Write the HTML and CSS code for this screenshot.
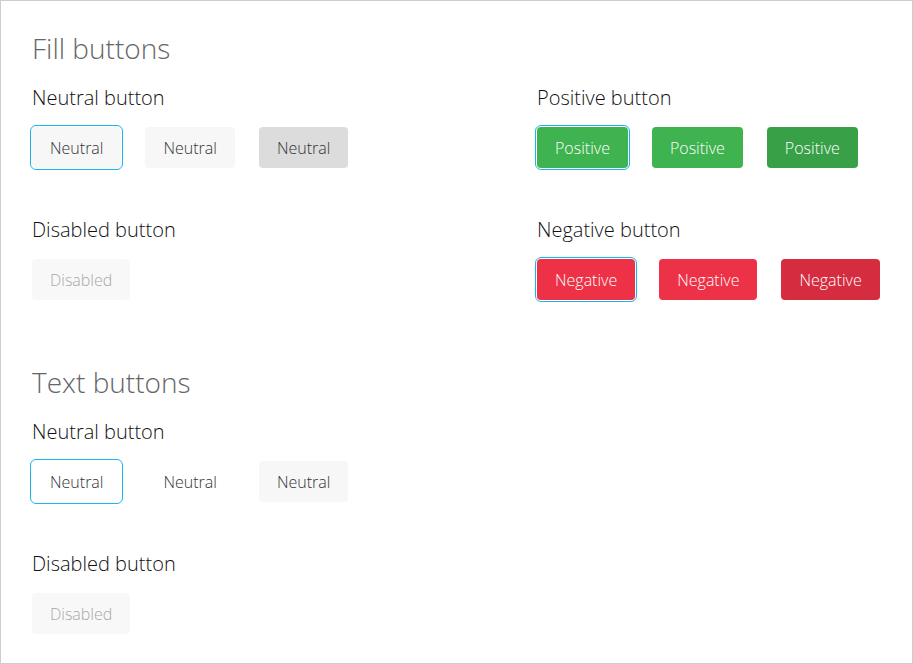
FILE: index.html
```html
<!DOCTYPE html>
<html lang="en">
<head>
<meta charset="utf-8">
<title>Buttons</title>
<link rel="stylesheet" href="styles.css">
</head>
<body>
<div class="frame">
  <section class="section">
    <h1 class="section-title">Fill buttons</h1>
    <div class="grid">
      <div class="group">
        <h2 class="group-title">Neutral button</h2>
        <div class="row">
          <button class="btn fill-neutral focused">Neutral</button>
          <button class="btn fill-neutral">Neutral</button>
          <button class="btn fill-neutral pressed">Neutral</button>
        </div>
      </div>
      <div class="group">
        <h2 class="group-title">Positive button</h2>
        <div class="row">
          <button class="btn fill-positive focused">Positive</button>
          <button class="btn fill-positive">Positive</button>
          <button class="btn fill-positive pressed">Positive</button>
        </div>
      </div>
      <div class="group">
        <h2 class="group-title">Disabled button</h2>
        <div class="row">
          <button class="btn disabled">Disabled</button>
        </div>
      </div>
      <div class="group">
        <h2 class="group-title">Negative button</h2>
        <div class="row">
          <button class="btn fill-negative focused">Negative</button>
          <button class="btn fill-negative">Negative</button>
          <button class="btn fill-negative pressed">Negative</button>
        </div>
      </div>
    </div>
  </section>
  <section class="section">
    <h1 class="section-title">Text buttons</h1>
    <div class="grid">
      <div class="group">
        <h2 class="group-title">Neutral button</h2>
        <div class="row">
          <button class="btn text-neutral focused">Neutral</button>
          <button class="btn text-neutral">Neutral</button>
          <button class="btn text-neutral hover">Neutral</button>
        </div>
      </div>
      <div class="group"></div>
      <div class="group">
        <h2 class="group-title">Disabled button</h2>
        <div class="row">
          <button class="btn disabled">Disabled</button>
        </div>
      </div>
    </div>
  </section>
</div>
</body>
</html>
```
FILE: styles.css
```css
* { box-sizing: border-box; }
html, body { margin: 0; padding: 0; background: #fff; }
body {
  font-family: "Open Sans", "Noto Sans", "Liberation Sans", sans-serif;
  font-weight: 300;
  color: #111;
}
.frame {
  width: 913px;
  height: 664px;
  border: 1px solid #cdcdcd;
  padding: 29px 0 0 31px;
  overflow: hidden;
}
.section { margin: 0 0 64px 0; }
.section-title {
  margin: 0 0 18px 0;
  font-size: 28px;
  line-height: 36px;
  font-weight: 300;
  color: #666;
}
.grid {
  display: grid;
  grid-template-columns: 505px 1fr;
  row-gap: 48px;
}
.group-title {
  margin: 0 0 15px 0;
  font-size: 20px;
  line-height: 28px;
  font-weight: 300;
  color: #111;
}
.row { display: flex; gap: 24px; }
.btn {
  height: 41px;
  padding: 0 18px;
  border: 0;
  border-radius: 4px;
  font-family: inherit;
  font-weight: 300;
  font-size: 16px;
  color: #333;
  background: transparent;
}
.focused { outline: 1px solid #19b6ee; outline-offset: 1px; }
.fill-neutral { background: #f7f7f7; }
.fill-neutral.pressed { background: #dcdcdc; }
.fill-positive { background: #3eb34f; color: #fff; }
.fill-positive.pressed { background: #38a047; }
.fill-negative { background: #ed3146; color: #fff; }
.fill-negative.pressed { background: #d52c40; }
.text-neutral.hover { background: #f7f7f7; }
.disabled { background: #f8f8f8; color: #a8a8a8; }
```
